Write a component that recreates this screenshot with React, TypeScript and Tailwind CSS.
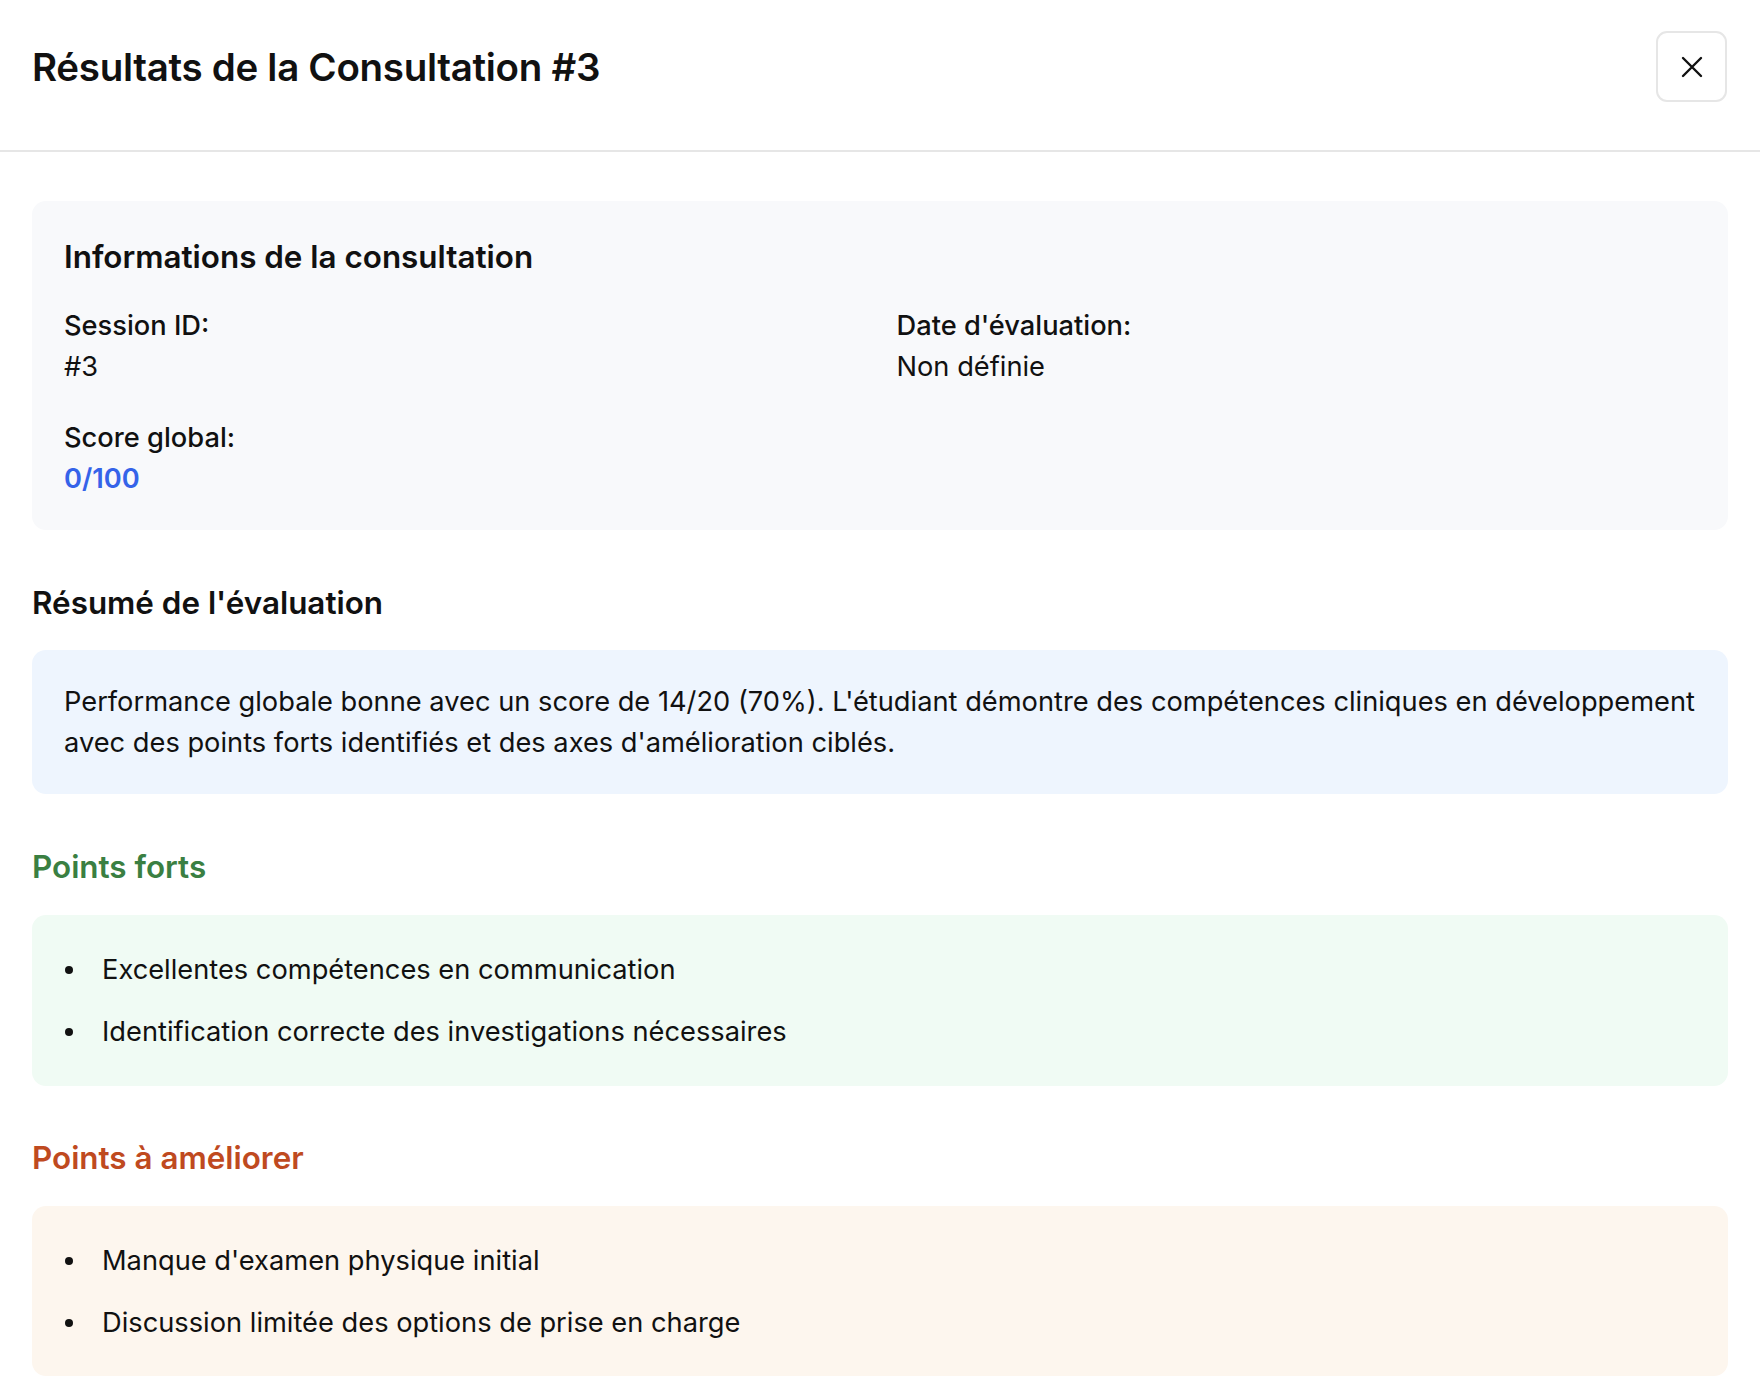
import React from "react";

const font = { fontFamily: "Inter, 'Noto Sans', sans-serif" };

function Bullet({ children }: { children: React.ReactNode }) {
  return (
    <li className="flex items-center">
      <span className="w-[38px] shrink-0 flex items-center">
        <span className="ml-[1px] block h-[8px] w-[8px] rounded-full bg-[#111111]" />
      </span>
      <span>{children}</span>
    </li>
  );
}

export default function App() {
  return (
    <div className="min-h-[1382px] w-full bg-white text-[#111111] antialiased" style={font}>
      <header className="h-[152px] border-b-2 border-[#e6e6e6] pl-[32px] pr-[33px] pt-[31px]">
        <div className="flex h-[71px] items-center justify-between">
          <h1 className="text-[38.5px] font-semibold leading-[48px] tracking-[-0.3px]">
            Résultats de la Consultation #3
          </h1>
          <button className="flex h-[71px] w-[71px] items-center justify-center rounded-[11px] border-2 border-[#e6e6e6] bg-white">
            <svg width="22" height="22" viewBox="0 0 22 22" fill="none" stroke="#111111" strokeWidth="2.4" strokeLinecap="round">
              <path d="M2 2L20 20M20 2L2 20" />
            </svg>
          </button>
        </div>
      </header>

      <main className="flex flex-col px-[32px] pt-[49px] text-[27.25px] leading-[40.5px]">
        <section className="rounded-[14px] bg-[#f8f9fb] px-[32px] pb-[31px] pt-[32px]">
          <h2 className="text-[31.4px] font-semibold leading-[48px]">Informations de la consultation</h2>
          <div className="mt-[25px] grid grid-cols-2 gap-x-[33px] gap-y-[31px]">
            <div>
              <div className="font-medium">Session ID:</div>
              <div>#3</div>
            </div>
            <div>
              <div className="font-medium">Date d'évaluation:</div>
              <div>Non définie</div>
            </div>
            <div>
              <div className="font-medium">Score global:</div>
              <div className="font-semibold text-[#3563e9]">0/100</div>
            </div>
          </div>
        </section>

        <h2 className="mt-[49px] text-[31.4px] font-semibold leading-[48px]">Résumé de l'évaluation</h2>
        <div className="mt-[23px] rounded-[14px] bg-[#eef5fe] px-[32px] pb-[31px] pt-[32px]">
          <p>
            Performance globale bonne avec un score de 14/20 (70%). L'étudiant démontre des compétences cliniques en
            développement avec des points forts identifiés et des axes d'amélioration ciblés.
          </p>
        </div>

        <h2 className="mt-[49px] text-[31.4px] font-semibold leading-[48px] text-[#3a7f42]">Points forts</h2>
        <ul className="mt-[24px] flex flex-col gap-[21px] rounded-[14px] bg-[#f0fbf4] px-[32px] pb-[34px] pt-[35px]">
          <Bullet>Excellentes compétences en communication</Bullet>
          <Bullet>Identification correcte des investigations nécessaires</Bullet>
        </ul>

        <h2 className="mt-[48px] text-[31.4px] font-semibold leading-[48px] text-[#bf4a1f]">Points à améliorer</h2>
        <ul className="mt-[24px] flex flex-col gap-[21px] rounded-[14px] bg-[#fdf6ee] px-[32px] pb-[33px] pt-[35px]">
          <Bullet>Manque d'examen physique initial</Bullet>
          <Bullet>Discussion limitée des options de prise en charge</Bullet>
        </ul>
        <div className="h-[24px]" />
      </main>
    </div>
  );
}
